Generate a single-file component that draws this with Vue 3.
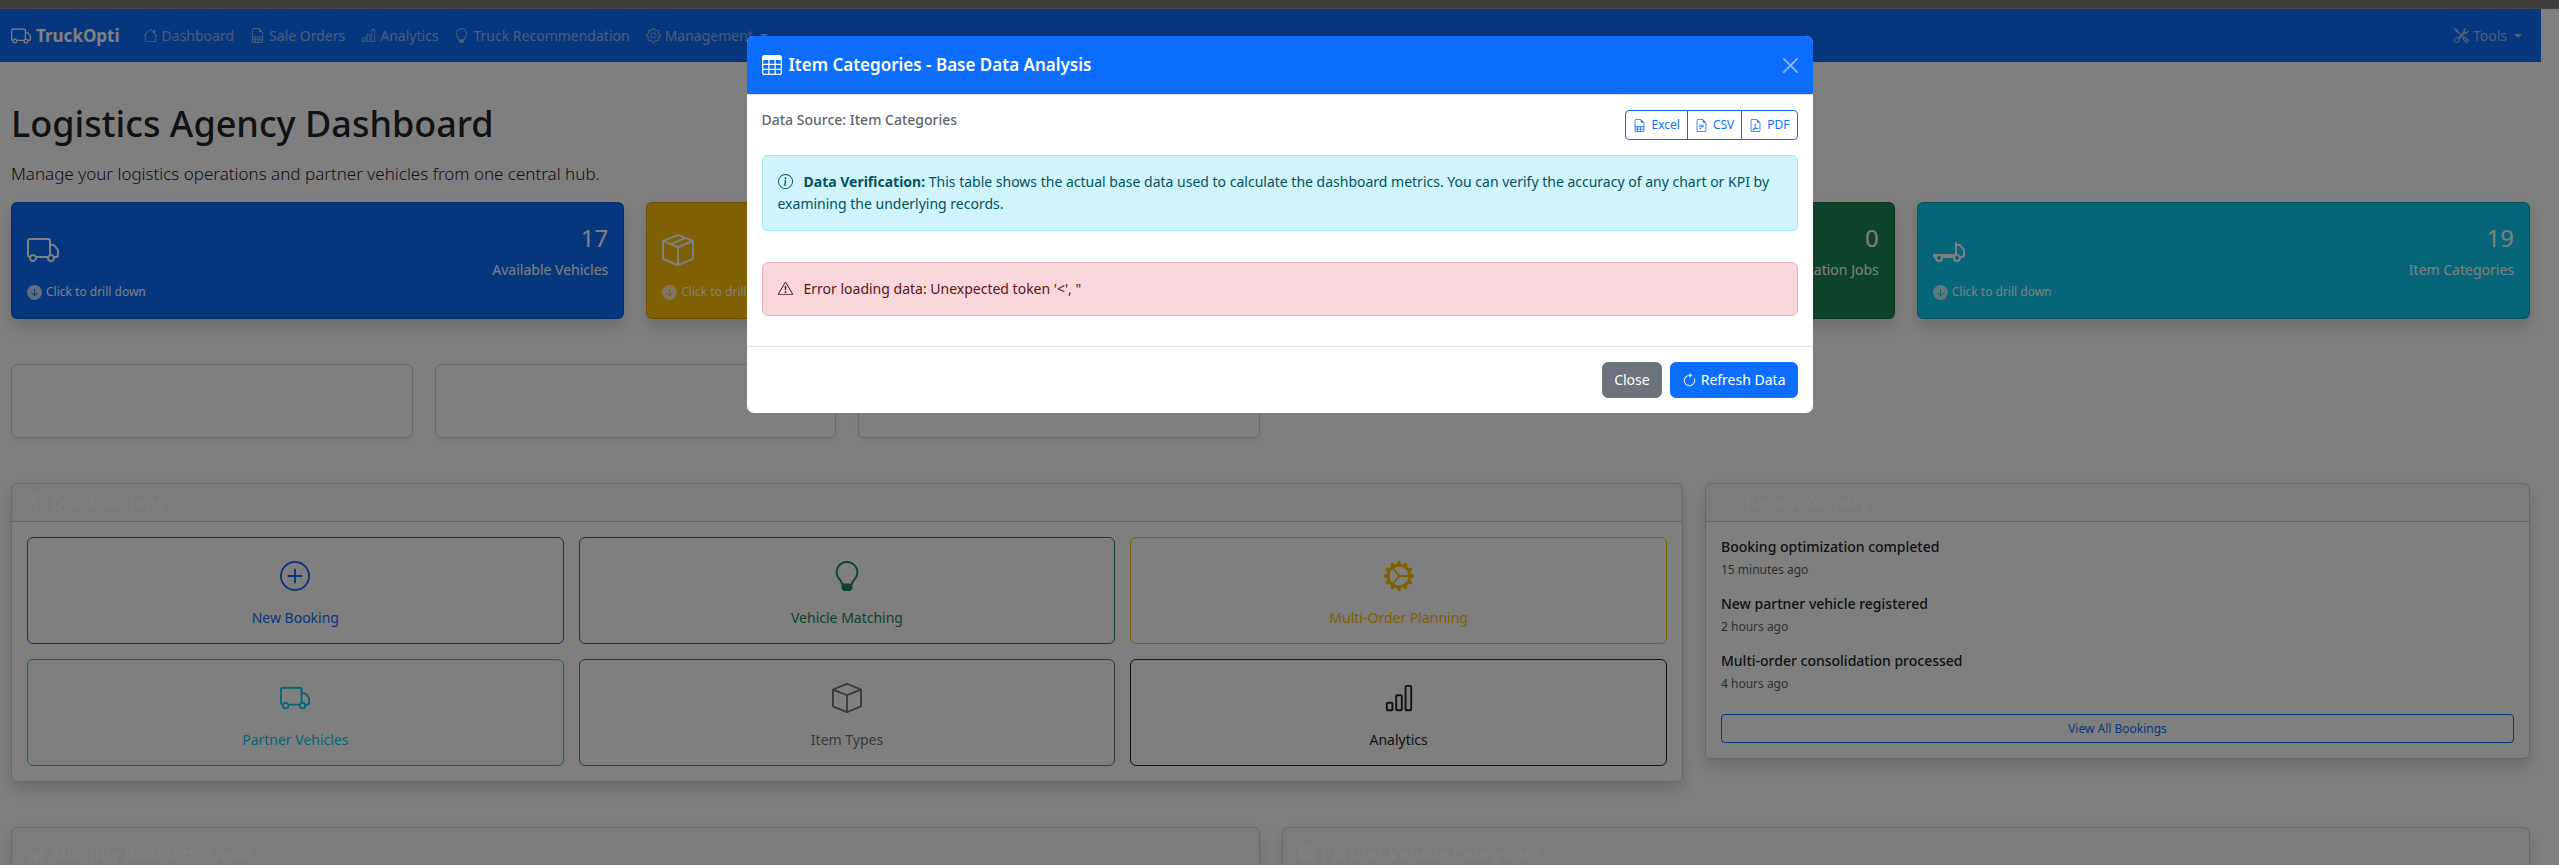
<script setup>
import { h } from 'vue'

const plusRing = 'M8 15A7 7 0 1 1 8 1a7 7 0 0 1 0 14zm0 1A8 8 0 1 0 8 0a8 8 0 0 0 0 16z'
const boxTail = 'M15 4.239l-6.5 2.6v7.922l6.5-2.6V4.24zM7.5 14.762V6.838L1 4.239v7.923l6.5 2.6zM7.443.184a1.5 1.5 0 0 1 1.114 0l7.129 2.852A.5.5 0 0 1 16 3.5v8.662a1 1 0 0 1-.629.928l-7.185 2.874a.5.5 0 0 1-.372 0L.63 13.09a1 1 0 0 1-.63-.928V3.5a.5.5 0 0 1 .314-.464L7.443.184z'
const fileOutline = 'M9.5 0H4a2 2 0 0 0-2 2v12a2 2 0 0 0 2 2h8a2 2 0 0 0 2-2V4.5L9.5 0zm0 1v2A1.5 1.5 0 0 0 11 4.5h2V14a1 1 0 0 1-1 1H4a1 1 0 0 1-1-1V2a1 1 0 0 1 1-1h5.5z'

const icons = {
  truck: ['M0 3.5A1.5 1.5 0 0 1 1.5 2h9A1.5 1.5 0 0 1 12 3.5V5h1.02a1.5 1.5 0 0 1 1.17.563l1.481 1.85a1.5 1.5 0 0 1 .329.938V10.5a1.5 1.5 0 0 1-1.5 1.5H14a2 2 0 1 1-4 0H5a2 2 0 1 1-3.998-.085A1.5 1.5 0 0 1 0 10.5v-7zm1.294 7.456A1.999 1.999 0 0 1 4.732 11h5.536a2.01 2.01 0 0 1 .732-.732V3.5a.5.5 0 0 0-.5-.5h-9a.5.5 0 0 0-.5.5v7a.5.5 0 0 0 .294.456zM12 10a2 2 0 0 1 1.732 1h.768a.5.5 0 0 0 .5-.5V8.35a.5.5 0 0 0-.11-.312l-1.48-1.85A.5.5 0 0 0 13.02 6H12v4zm-9 1a1 1 0 1 0 0 2 1 1 0 0 0 0-2zm9 0a1 1 0 1 0 0 2 1 1 0 0 0 0-2z'],
  flatbed: ['M11.5 4a.5.5 0 0 1 .5.5V5h1.02a1.5 1.5 0 0 1 1.17.563l1.481 1.85a1.5 1.5 0 0 1 .329.938V10.5a1.5 1.5 0 0 1-1.5 1.5H14a2 2 0 1 1-4 0H5a2 2 0 1 1-4 0 1 1 0 0 1-1-1v-1h11V4.5a.5.5 0 0 1 .5-.5zM3 11a1 1 0 1 0 0 2 1 1 0 0 0 0-2zm9 0a1 1 0 1 0 0 2 1 1 0 0 0 0-2zm1.732 0h.768a.5.5 0 0 0 .5-.5V8.35a.5.5 0 0 0-.11-.312l-1.48-1.85A.5.5 0 0 0 13.02 6H12v4a2 2 0 0 1 1.732 1z'],
  house: ['M8.707 1.5a1 1 0 0 0-1.414 0L.646 8.146a.5.5 0 0 0 .708.708L2 8.207V13.5A1.5 1.5 0 0 0 3.5 15h9a1.5 1.5 0 0 0 1.5-1.5V8.207l.646.647a.5.5 0 0 0 .708-.708L13 5.793V2.5a.5.5 0 0 0-.5-.5h-1a.5.5 0 0 0-.5.5v1.293L8.707 1.5ZM13 7.207V13.5a.5.5 0 0 1-.5.5h-9a.5.5 0 0 1-.5-.5V7.207l5-5 5 5Z'],
  sheet: ['M14 14V4.5L9.5 0H4a2 2 0 0 0-2 2v12a2 2 0 0 0 2 2h8a2 2 0 0 0 2-2zM9.5 3A1.5 1.5 0 0 0 11 4.5h2V9H3V2a1 1 0 0 1 1-1h5.5v2zM3 12v-2h2v2H3zm0 1h2v2H4a1 1 0 0 1-1-1v-1zm3 2v-2h3v2H6zm4 0v-2h3v1a1 1 0 0 1-1 1h-2zm3-3h-3v-2h3v2zm-7 0v-2h3v2H6z'],
  text: [fileOutline, 'M5.5 7a.5.5 0 0 0 0 1h5a.5.5 0 0 0 0-1h-5zM5 9.5a.5.5 0 0 1 .5-.5h5a.5.5 0 0 1 0 1h-5a.5.5 0 0 1-.5-.5zm0 2a.5.5 0 0 1 .5-.5h2a.5.5 0 0 1 0 1h-2a.5.5 0 0 1-.5-.5z'],
  pdf: [fileOutline, 'M7.4 5.8c.6-.5 1.300-.1 1.200.900-.1 1-.4 1.900-.7 2.600.400.800.9 1.400 1.400 1.900 1.100-.1 2.300.1 2.400.900 0 .9-1.300.9-2.600-.1-.7.1-1.400.3-2.100.5-.8 1.300-1.700 2-2.300 1.700-.8-.4-.3-1.600 1.500-2.400.4-.700.7-1.400 1-2.200-.4-1.300-.4-3.300.2-3.800zM7.700 10.300l-.500 1.100 1.300-.3z'],
  chart: ['M4 11H2v3h2v-3zm5-4H7v7h2V7zm5-5v12h-2V2h2zm-2-1a1 1 0 0 0-1 1v12a1 1 0 0 0 1 1h2a1 1 0 0 0 1-1V2a1 1 0 0 0-1-1h-2zM6 7a1 1 0 0 1 1-1h2a1 1 0 0 1 1 1v7a1 1 0 0 1-1 1H7a1 1 0 0 1-1-1V7zm-5 4a1 1 0 0 1 1-1h2a1 1 0 0 1 1 1v3a1 1 0 0 1-1 1H2a1 1 0 0 1-1-1v-3z'],
  chartFill: ['M1 11a1 1 0 0 1 1-1h2a1 1 0 0 1 1 1v3a1 1 0 0 1-1 1H2a1 1 0 0 1-1-1v-3zm5-4a1 1 0 0 1 1-1h2a1 1 0 0 1 1 1v7a1 1 0 0 1-1 1H7a1 1 0 0 1-1-1V7zm5-5a1 1 0 0 1 1-1h2a1 1 0 0 1 1 1v12a1 1 0 0 1-1 1h-2a1 1 0 0 1-1-1V2z'],
  pie: ['M15.985 8.5H8.207l-5.5 5.5a8 8 0 0 0 13.277-5.5zM2 13.292A8 8 0 0 1 7.5.015v7.778l-5.5 5.5zM8.5.015V7.5h7.485A8.001 8.001 0 0 0 8.5.015z'],
  bulb: ['M2 6a6 6 0 1 1 10.174 4.31c-.203.196-.359.4-.453.619l-.762 1.769A.5.5 0 0 1 10.5 13a.5.5 0 0 1 0 1 .5.5 0 0 1 0 1l-.224.447a1 1 0 0 1-.894.553H6.618a1 1 0 0 1-.894-.553L5.5 15a.5.5 0 0 1 0-1 .5.5 0 0 1 0-1 .5.5 0 0 1-.46-.302l-.761-1.77a1.964 1.964 0 0 0-.453-.618A5.984 5.984 0 0 1 2 6zm6-5a5 5 0 0 0-3.479 8.592c.263.254.514.564.676.941L5.83 12h4.342l.632-1.467c.162-.377.413-.687.676-.941A5 5 0 0 0 8 1z'],
  gear: ['M8 4.754a3.246 3.246 0 1 0 0 6.492 3.246 3.246 0 0 0 0-6.492zM5.754 8a2.246 2.246 0 1 1 4.492 0 2.246 2.246 0 0 1-4.492 0z', 'M9.796 1.343c-.527-1.79-3.065-1.79-3.592 0l-.094.319a.873.873 0 0 1-1.255.52l-.292-.16c-1.64-.892-3.433.902-2.54 2.541l.159.292a.873.873 0 0 1-.52 1.255l-.319.094c-1.79.527-1.79 3.065 0 3.592l.319.094a.873.873 0 0 1 .52 1.255l-.16.292c-.892 1.64.901 3.434 2.541 2.54l.292-.159a.873.873 0 0 1 1.255.52l.094.319c.527 1.79 3.065 1.79 3.592 0l.094-.319a.873.873 0 0 1 1.255-.52l.292.16c1.64.893 3.434-.902 2.54-2.541l-.159-.292a.873.873 0 0 1 .52-1.255l.319-.094c1.79-.527 1.79-3.065 0-3.592l-.319-.094a.873.873 0 0 1-.52-1.255l.16-.292c.893-1.64-.902-3.433-2.541-2.54l-.292.159a.873.873 0 0 1-1.255-.52l-.094-.319zm-2.633.283c.246-.835 1.428-.835 1.674 0l.094.319a1.873 1.873 0 0 0 2.693 1.115l.291-.16c.764-.415 1.6.42 1.184 1.185l-.159.292a1.873 1.873 0 0 0 1.116 2.692l.318.094c.835.246.835 1.428 0 1.674l-.319.094a1.873 1.873 0 0 0-1.115 2.693l.16.291c.415.764-.42 1.6-1.185 1.184l-.291-.159a1.873 1.873 0 0 0-2.693 1.116l-.094.318c-.246.835-1.428.835-1.674 0l-.094-.319a1.873 1.873 0 0 0-2.692-1.115l-.292.16c-.764.415-1.6-.42-1.184-1.185l.159-.291A1.873 1.873 0 0 0 1.945 8.93l-.319-.094c-.835-.246-.835-1.428 0-1.674l.319-.094A1.873 1.873 0 0 0 3.06 4.377l-.16-.292c-.415-.764.42-1.6 1.185-1.184l.292.159a1.873 1.873 0 0 0 2.692-1.115l.094-.319z'],
  tools: ['M1 0 0 1l2.2 3.081a1 1 0 0 0 .815.419h.07a1 1 0 0 1 .708.293l2.675 2.675-2.617 2.654A3.003 3.003 0 0 0 0 13a3 3 0 1 0 5.878-.851l2.654-2.617.968.968-.305.914a1 1 0 0 0 .242 1.023l3.27 3.27a.997.997 0 0 0 1.414 0l1.586-1.586a.997.997 0 0 0 0-1.414l-3.27-3.27a1 1 0 0 0-1.023-.242L10.5 9.5l-.96-.96 2.68-2.643A3.005 3.005 0 0 0 16 3c0-.269-.035-.53-.102-.777l-2.14 2.141L12 4l-.364-1.757L13.777.102a3 3 0 0 0-3.675 3.68L7.462 6.46 4.793 3.793a1 1 0 0 1-.293-.707v-.071a1 1 0 0 0-.419-.814L1 0zm9.646 10.646a.5.5 0 0 1 .708 0l2.914 2.915a.5.5 0 0 1-.707.707l-2.915-2.914a.5.5 0 0 1 0-.708zM3 11l.471.242.529.026.287.445.445.287.026.529L5 13l-.242.471-.026.529-.445.287-.287.445-.529.026L3 15l-.471-.242L2 14.732l-.287-.445L1.268 14l-.026-.529L1 13l.242-.471.026-.529.445-.287.287-.445.529-.026L3 11z'],
  boxSeam: ['M8.186 1.113a.5.5 0 0 0-.372 0L1.846 3.5l2.404.961L10.404 2l-2.218-.887zm3.564 1.426L5.596 5 8 5.961 14.154 3.5l-2.404-.961z' + boxTail],
  box: ['M8.186 1.113a.5.5 0 0 0-.372 0L1.846 3.5 8 5.961 14.154 3.5 8.186 1.113z' + boxTail],
  down: ['M16 8A8 8 0 1 1 0 8a8 8 0 0 1 16 0zM8.5 4.5a.5.5 0 0 0-1 0v5.793L5.354 8.146a.5.5 0 1 0-.708.708l3 3a.5.5 0 0 0 .708 0l3-3a.5.5 0 0 0-.708-.708L8.5 10.293V4.5z'],
  plus: [plusRing, 'M8 4a.5.5 0 0 1 .5.5v3h3a.5.5 0 0 1 0 1h-3v3a.5.5 0 0 1-1 0v-3h-3a.5.5 0 0 1 0-1h3v-3A.5.5 0 0 1 8 4z'],
  gearWide: ['M7.068.727c.243-.97 1.62-.97 1.864 0l.071.286a.96.96 0 0 0 1.622.434l.205-.211c.695-.719 1.888-.03 1.613.931l-.08.284a.96.96 0 0 0 1.187 1.187l.283-.081c.96-.275 1.65.918.931 1.613l-.211.205a.96.96 0 0 0 .434 1.622l.286.071c.97.243.97 1.62 0 1.864l-.286.071a.96.96 0 0 0-.434 1.622l.211.205c.719.695.03 1.888-.931 1.613l-.284-.08a.96.96 0 0 0-1.187 1.187l.081.283c.275.96-.918 1.65-1.613.931l-.205-.211a.96.96 0 0 0-1.622.434l-.071.286c-.243.97-1.62.97-1.864 0l-.071-.286a.96.96 0 0 0-1.622-.434l-.205.211c-.695.719-1.888.03-1.613-.931l.08-.284a.96.96 0 0 0-1.186-1.187l-.284.081c-.96.275-1.65-.918-.931-1.613l.211-.205a.96.96 0 0 0-.434-1.622l-.286-.071c-.97-.243-.97-1.62 0-1.864l.286-.071a.96.96 0 0 0 .434-1.622l-.211-.205c-.719-.695-.03-1.888.931-1.613l.284.08a.96.96 0 0 0 1.187-1.186l-.081-.284c-.275-.96.918-1.65 1.613-.931l.205.211a.96.96 0 0 0 1.622-.434l.071-.286zM12.973 8.5H8.25l-2.834 3.779A4.998 4.998 0 0 0 12.973 8.5zm0-1a4.998 4.998 0 0 0-7.557-3.779l2.834 3.78h4.723zm-8.356-3.178A4.984 4.984 0 0 0 3.002 8c0 1.455.622 2.765 1.615 3.678L7.375 8 4.617 4.322z'],
  bolt: ['M5.52.359A.5.5 0 0 1 6 0h4a.5.5 0 0 1 .474.658L8.694 6H12.5a.5.5 0 0 1 .395.807l-7 9a.5.5 0 0 1-.873-.454L6.823 9.5H3.5a.5.5 0 0 1-.48-.641l2.5-8.5z'],
  clock: ['M8 3.5a.5.5 0 0 0-1 0V9a.5.5 0 0 0 .252.434l3.5 2a.5.5 0 0 0 .496-.868L8 8.71V3.5z', 'M8 16A8 8 0 1 0 8 0a8 8 0 0 0 0 16zm7-8A7 7 0 1 1 1 8a7 7 0 0 1 14 0z'],
  table: ['M0 2a2 2 0 0 1 2-2h12a2 2 0 0 1 2 2v12a2 2 0 0 1-2 2H2a2 2 0 0 1-2-2V2zm15 2h-4v3h4V4zm0 4h-4v3h4V8zm0 4h-4v3h3a1 1 0 0 0 1-1v-2zm-5 3v-3H6v3h4zm-5 0v-3H1v2a1 1 0 0 0 1 1h3zm-4-4h4V8H1v3zm0-4h4V4H1v3zm5-3v3h4V4H6zm4 4H6v3h4V8z'],
  info: [plusRing, 'm8.93 6.588-2.29.287-.082.38.45.083c.294.07.352.176.288.469l-.738 3.468c-.194.897.105 1.319.808 1.319.545 0 1.178-.252 1.465-.598l.088-.416c-.2.176-.492.246-.686.246-.275 0-.375-.193-.304-.533L8.93 6.588zM9 4.5a1 1 0 1 1-2 0 1 1 0 0 1 2 0z'],
  warn: ['M7.938 2.016A.13.13 0 0 1 8.002 2a.13.13 0 0 1 .063.016.146.146 0 0 1 .054.057l6.857 11.667c.036.06.035.124.002.183a.163.163 0 0 1-.054.06.116.116 0 0 1-.066.017H1.146a.115.115 0 0 1-.066-.017.163.163 0 0 1-.054-.06.176.176 0 0 1 .002-.183L7.884 2.073a.147.147 0 0 1 .054-.057zm1.044-.45a1.13 1.13 0 0 0-1.96 0L.165 13.233c-.457.778.091 1.767.98 1.767h13.713c.889 0 1.438-.99.98-1.767L8.982 1.566z', 'M7.002 12a1 1 0 1 1 2 0 1 1 0 0 1-2 0zM7.1 5.995a.905.905 0 1 1 1.8 0l-.35 3.507a.552.552 0 0 1-1.1 0L7.1 5.995z'],
  refresh: ['M8 3a5 5 0 1 0 4.546 2.914.5.5 0 0 1 .908-.417A6 6 0 1 1 8 2v1z', 'M8 4.466V.534a.25.25 0 0 1 .41-.192l2.36 1.966c.12.1.12.284 0 .384L8.41 4.658A.25.25 0 0 1 8 4.466z'],
  close: ['M.293.293a1 1 0 0 1 1.414 0L8 6.586 14.293.293a1 1 0 1 1 1.414 1.414L9.414 8l6.293 6.293a1 1 0 0 1-1.414 1.414L8 9.414l-6.293 6.293a1 1 0 0 1-1.414-1.414L6.586 8 .293 1.707a1 1 0 0 1 0-1.414z']
}

const Icon = (props) =>
  h('svg', { viewBox: '0 0 16 16', fill: 'currentColor', 'aria-hidden': 'true' },
    icons[props.name].map((d) => h('path', { d, 'fill-rule': 'evenodd' })))
Icon.props = ['name']

const nav = [
  { icon: 'house', label: 'Dashboard' },
  { icon: 'sheet', label: 'Sale Orders' },
  { icon: 'chart', label: 'Analytics' },
  { icon: 'bulb', label: 'Truck Recommendation' },
  { icon: 'gear', label: 'Management', menu: true }
]
const kpis = [
  { tone: 'primary', icon: 'truck', value: '17', label: 'Available Vehicles', drill: true },
  { tone: 'warning', icon: 'boxSeam', drill: true },
  { tone: 'success', value: '0', label: 'Optimization Jobs' },
  { tone: 'info', icon: 'flatbed', value: '19', label: 'Item Categories', drill: true }
]
const actions = [
  { tone: 'primary', icon: 'plus', label: 'New Booking' },
  { tone: 'success', icon: 'bulb', label: 'Vehicle Matching' },
  { tone: 'warning', icon: 'gearWide', label: 'Multi-Order Planning' },
  { tone: 'info', icon: 'truck', label: 'Partner Vehicles' },
  { tone: 'secondary', icon: 'box', label: 'Item Types' },
  { tone: 'dark', icon: 'chart', label: 'Analytics' }
]
const activity = [
  { title: 'Booking optimization completed', time: '15 minutes ago' },
  { title: 'New partner vehicle registered', time: '2 hours ago' },
  { title: 'Multi-order consolidation processed', time: '4 hours ago' }
]
const exportsList = [
  { icon: 'sheet', label: 'Excel' },
  { icon: 'text', label: 'CSV' },
  { icon: 'pdf', label: 'PDF' }
]
</script>

<template>
  <div class="page">
    <div class="strip"></div>
    <div class="screen">
      <nav class="navbar">
        <a class="brand" href="#"><Icon name="truck" class="ic20" />TruckOpti</a>
        <a v-for="n in nav" :key="n.label" class="nav-link" href="#">
          <Icon :name="n.icon" class="ic15" />{{ n.label }}<span v-if="n.menu" class="caret"></span>
        </a>
        <a class="nav-link tools" href="#"><Icon name="tools" class="ic15" />Tools<span class="caret"></span></a>
      </nav>

      <main class="main">
        <h1>Logistics Agency Dashboard</h1>
        <p class="lead">Manage your logistics operations and partner vehicles from one central hub.</p>

        <div class="row four">
          <a v-for="k in kpis" :key="k.tone" href="#" class="kpi" :class="'bg-' + k.tone">
            <div class="kpi-top">
              <Icon v-if="k.icon" :name="k.icon" class="ic32" />
              <div v-if="k.value" class="kpi-figures">
                <div class="kpi-value">{{ k.value }}</div>
                <div class="kpi-label">{{ k.label }}</div>
              </div>
            </div>
            <div class="drill"><template v-if="k.drill"><Icon name="down" class="ic15" />Click to drill down</template></div>
          </a>
        </div>

        <div class="row six">
          <div v-for="i in 3" :key="i" class="blank"></div>
        </div>

        <div class="row split">
          <section class="card">
            <h2 class="card-head"><Icon name="bolt" class="ic18" />Quick Actions</h2>
            <div class="card-body tiles">
              <a v-for="a in actions" :key="a.label" href="#" class="tile" :class="'line-' + a.tone">
                <Icon :name="a.icon" class="ic30" />{{ a.label }}
              </a>
            </div>
          </section>
          <section class="card">
            <h2 class="card-head"><Icon name="clock" class="ic18" />Recent Activity</h2>
            <div class="card-body">
              <div v-for="a in activity" :key="a.title" class="event">
                <h3>{{ a.title }}</h3>
                <small>{{ a.time }}</small>
              </div>
              <a class="view-all" href="#">View All Bookings</a>
            </div>
          </section>
        </div>

        <div class="row two">
          <section class="card chart-card">
            <h2 class="card-head tall"><Icon name="chartFill" class="ic18" />Monthly Bookings Trend</h2>
          </section>
          <section class="card chart-card">
            <h2 class="card-head tall"><Icon name="pie" class="ic18" />Partner Vehicle Categories</h2>
          </section>
        </div>
      </main>
    </div>

    <div class="backdrop">
      <div class="modal" role="dialog" aria-labelledby="modal-title">
        <header class="modal-head">
          <h2 id="modal-title"><Icon name="table" class="ic20" />Item Categories - Base Data Analysis</h2>
          <button class="x" type="button" aria-label="Close dialog"><Icon name="close" class="ic15" /></button>
        </header>
        <div class="modal-body">
          <div class="source">
            <h3>Data Source: Item Categories</h3>
            <div class="group">
              <button v-for="e in exportsList" :key="e.label" type="button"><Icon :name="e.icon" class="ic13" />{{ e.label }}</button>
            </div>
          </div>
          <div class="alert alert-info">
            <Icon name="info" class="ic15" /><strong>Data Verification:</strong> This table shows the actual base data used to calculate the dashboard metrics. You can verify the accuracy of any chart or KPI by examining the underlying records.
          </div>
          <div class="alert alert-danger">
            <Icon name="warn" class="ic15" />Error loading data: Unexpected token '&lt;', "
          </div>
        </div>
        <footer class="modal-foot">
          <button class="btn grey" type="button">Close</button>
          <button class="btn blue" type="button"><Icon name="refresh" class="ic15" />Refresh Data</button>
        </footer>
      </div>
    </div>
  </div>
</template>

<style>
body {
  margin: 0;
  overflow: hidden;
}
</style>

<style scoped>
* {
  box-sizing: border-box;
}
.page {
  height: 100vh;
  overflow: hidden;
  background: #fff;
  color: #212529;
  font-family: "Noto Sans", "Open Sans", sans-serif;
  font-size: 14px;
  line-height: 22px;
}
h1, h2, h3, p {
  margin: 0;
}
a {
  text-decoration: none;
  color: inherit;
}
button {
  font: inherit;
  margin: 0;
  cursor: pointer;
}
svg {
  flex: none;
}
.ic13 { width: 13px; height: 13px; }
.ic15 { width: 15px; height: 15px; }
.ic18 { width: 18px; height: 18px; }
.ic20 { width: 20px; height: 20px; }
.ic30 { width: 30px; height: 30px; }
.ic32 { width: 32px; height: 32px; }

.strip {
  height: 9px;
  background: #787878;
  border-bottom: 1px solid #8c8c84;
}
.screen {
  padding-right: 18px;
}
.navbar {
  display: flex;
  align-items: center;
  height: 53px;
  padding: 0 11px;
  background: #0d6efd;
}
.brand {
  display: flex;
  align-items: center;
  gap: 5px;
  margin-right: 15px;
  color: #fff;
  font-size: 17px;
  font-weight: 700;
}
.nav-link {
  display: flex;
  align-items: center;
  gap: 4px;
  padding: 8px;
  color: rgba(255, 255, 255, .55);
}
.caret {
  margin-left: 3px;
  border: 4px solid transparent;
  border-top-color: currentColor;
  border-bottom: 0;
}
.tools {
  margin-left: auto;
}
.main {
  padding: 40px 11px 0;
}
h1 {
  width: fit-content;
  margin-bottom: 14px;
  font-size: 36px;
  font-weight: 500;
  line-height: 44px;
}
.lead {
  width: fit-content;
  margin-bottom: 14px;
  font-size: 17px;
  font-weight: 300;
  line-height: 28px;
}
.row {
  display: grid;
  column-gap: 22px;
  align-items: start;
  margin-bottom: 45px;
}
.four { grid-template-columns: repeat(4, 1fr); }
.six { grid-template-columns: repeat(6, 1fr); }
.two { grid-template-columns: repeat(2, 1fr); }
.split { grid-template-columns: calc((100% + 22px) / 3 * 2 - 22px) 1fr; }

.kpi {
  padding: 15px 15px 16px;
  border: 1px solid rgba(0, 0, 0, .175);
  border-radius: 6px;
  box-shadow: 0 8px 16px rgba(0, 0, 0, .15);
  color: #fff;
}
.kpi-top {
  display: flex;
  align-items: center;
  min-height: 64px;
}
.kpi-figures {
  margin-left: auto;
  text-align: right;
}
.kpi-value {
  font-size: 24px;
  line-height: 40px;
}
.kpi-label {
  line-height: 24px;
}
.drill {
  display: flex;
  align-items: center;
  gap: 4px;
  min-height: 20px;
  font-size: 12px;
  line-height: 20px;
}
.drill svg {
  opacity: .75;
}
.bg-primary { background: #0d6efd; }
.bg-warning { background: #ffc107; }
.bg-success { background: #198754; }
.bg-info { background: #0dcaf0; }

.blank {
  height: 74px;
  border: 1px solid rgba(0, 0, 0, .175);
  border-radius: 6px;
  box-shadow: 0 2px 4px rgba(0, 0, 0, .075);
}
.card {
  border: 1px solid rgba(0, 0, 0, .175);
  border-radius: 6px;
  box-shadow: 0 8px 16px rgba(0, 0, 0, .15);
}
.card-head {
  display: flex;
  align-items: center;
  gap: 6px;
  padding: 7px 15px;
  border-bottom: 1px solid rgba(0, 0, 0, .175);
  background: rgba(0, 0, 0, .03);
  color: #fff;
  font-size: 17px;
  font-weight: 600;
  line-height: 23px;
}
.tall {
  padding: 14px 15px;
}
.chart-card {
  height: 300px;
}
.card-body {
  padding: 15px;
}
.tiles {
  display: grid;
  grid-template-columns: repeat(3, 1fr);
  gap: 15px;
}
.tile {
  display: flex;
  flex-direction: column;
  align-items: center;
  gap: 16px;
  padding: 23px 12px 14px;
  border: 1px solid;
  border-radius: 6px;
}
.line-primary { color: #0d6efd; }
.line-success { color: #198754; }
.line-warning { color: #ffc107; }
.line-info { color: #0dcaf0; }
.line-secondary { color: #6c757d; }
.line-dark { color: #212529; }

.event {
  margin-bottom: 14px;
}
.event h3 {
  margin-bottom: 3px;
  font-size: 14px;
  font-weight: 500;
  line-height: 20px;
}
.event small {
  display: block;
  color: #595f65;
  font-size: 12px;
  line-height: 20px;
}
.view-all {
  display: block;
  margin-top: 20px;
  padding: 3px;
  border: 1px solid #0d6efd;
  border-radius: 4px;
  color: #0d6efd;
  font-size: 12px;
  line-height: 21px;
  text-align: center;
}

.backdrop {
  position: fixed;
  inset: 0;
  display: flex;
  align-items: flex-start;
  justify-content: center;
  padding: 36px 16px 0;
  background: rgba(0, 0, 0, .5);
}
.modal {
  width: 100%;
  max-width: 1066px;
  overflow: hidden;
  border-radius: 7px;
  background: #fff;
}
.modal-head {
  display: flex;
  align-items: center;
  justify-content: space-between;
  padding: 15px;
  border-bottom: 1px solid #dee2e6;
  background: #0d6efd;
  background-clip: padding-box;
  color: #fff;
}
.modal-head h2 {
  display: flex;
  align-items: center;
  gap: 7px;
  font-size: 17px;
  font-weight: 600;
  line-height: 28px;
}
.x {
  display: flex;
  padding: 0;
  border: 0;
  background: none;
  color: #fff;
  opacity: .5;
}
.modal-body {
  padding: 15px;
}
.source {
  display: flex;
  align-items: flex-start;
  justify-content: space-between;
  margin-bottom: 15px;
}
.source h3 {
  color: #5f666c;
  font-size: 14px;
  font-weight: 500;
  line-height: 20px;
}
.group {
  display: flex;
}
.group button {
  display: flex;
  align-items: center;
  gap: 5px;
  height: 30px;
  padding: 0 7px;
  border: 1px solid #0d6efd;
  background: #fff;
  color: #0d6efd;
  font-size: 12px;
}
.group button + button {
  margin-left: -1px;
}
.group button:first-child {
  border-radius: 4px 0 0 4px;
}
.group button:last-child {
  border-radius: 0 4px 4px 0;
}
.alert {
  padding: 15px;
  border: 1px solid;
  border-radius: 6px;
}
.alert svg {
  margin-right: 11px;
  vertical-align: -2px;
}
.alert-info {
  margin-bottom: 31px;
  border-color: #9eeaf9;
  background: #cff4fc;
  color: #055160;
}
.alert-danger {
  margin-bottom: 15px;
  border-color: #f1aeb5;
  background: #f8d7da;
  color: #58151c;
}
.modal-foot {
  display: flex;
  justify-content: flex-end;
  gap: 8px;
  padding: 15px;
  border-top: 1px solid #dee2e6;
}
.btn {
  display: flex;
  align-items: center;
  gap: 4px;
  padding: 6px 11px;
  border: 1px solid;
  border-radius: 6px;
  color: #fff;
  line-height: 22px;
}
.grey {
  border-color: #6c757d;
  background: #6c757d;
}
.blue {
  border-color: #0d6efd;
  background: #0d6efd;
}
</style>
